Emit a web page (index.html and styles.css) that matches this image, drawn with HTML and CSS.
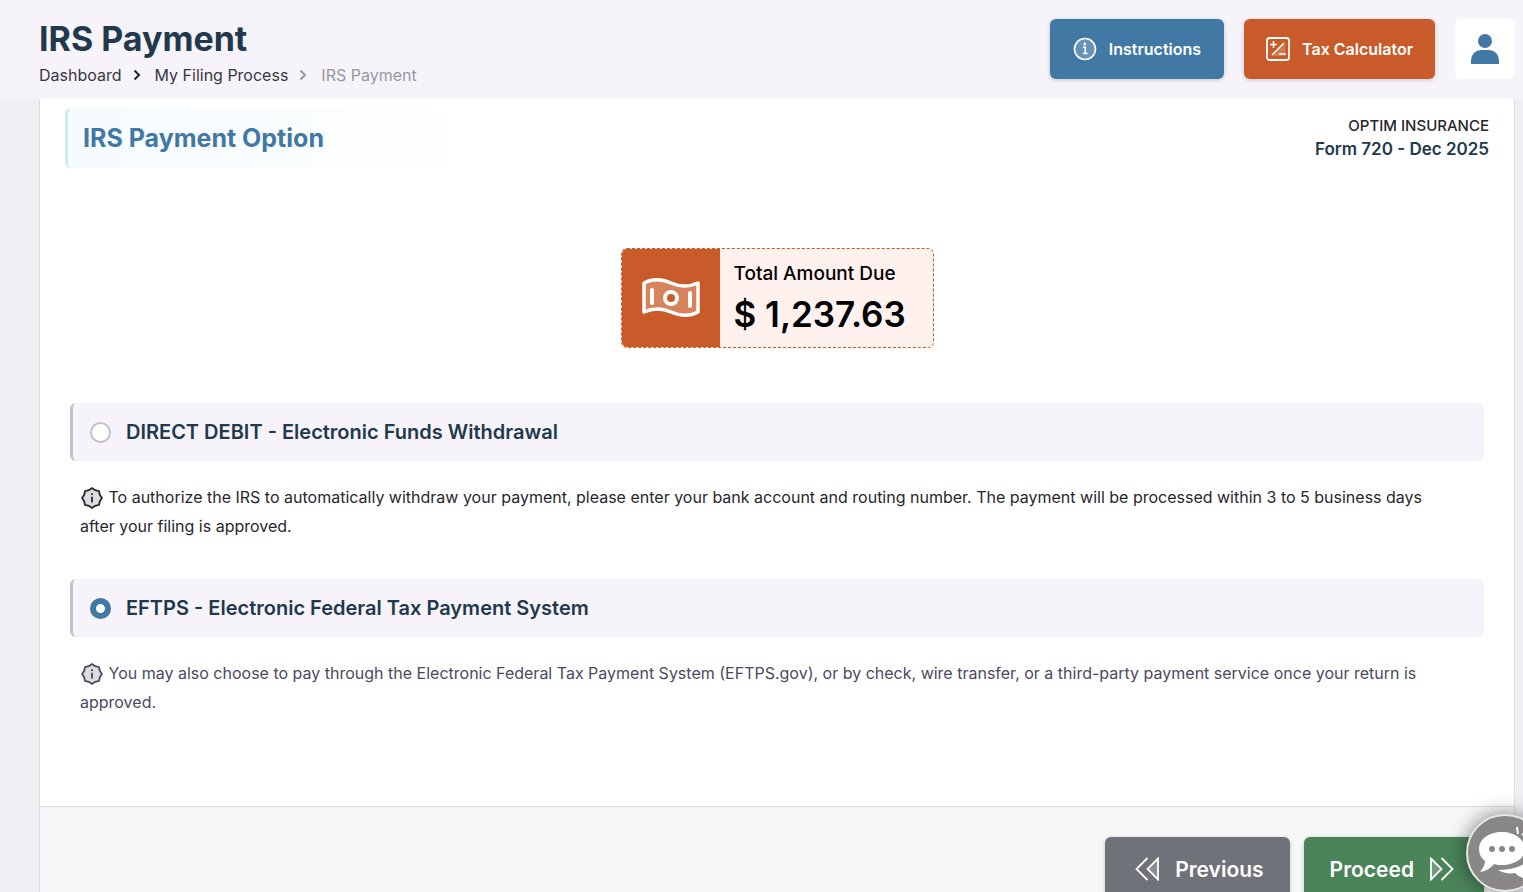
FILE: index.html
```html
<!DOCTYPE html>
<html lang="en">
<head>
  <meta charset="UTF-8">
  <meta name="viewport" content="width=device-width, initial-scale=1.0">
  <title>IRS Payment</title>
  <link rel="stylesheet" href="styles.css">
</head>
<body>
  <header class="page-header">
    <div class="page-heading">
      <h1>IRS Payment</h1>
      <nav class="breadcrumb" aria-label="Breadcrumb">
        <a href="#">Dashboard</a>
        <svg class="chevron" viewBox="0 0 8 12"><path d="M1.5 1.5 6 6l-4.5 4.5"/></svg>
        <a href="#">My Filing Process</a>
        <svg class="chevron muted" viewBox="0 0 8 12"><path d="M1.5 1.5 6 6l-4.5 4.5"/></svg>
        <span class="muted">IRS Payment</span>
      </nav>
    </div>
    <div class="header-actions">
      <button type="button" class="btn btn-blue">
        <svg class="btn-icon" viewBox="0 0 24 24">
          <circle cx="12" cy="12" r="10.5" fill="#fff" fill-opacity="0.2" stroke="#fff" stroke-width="1.6"/>
          <path d="M10 10.3h2.3v6.2M10 16.5h4.6" fill="none" stroke="#fff" stroke-width="1.6"/>
          <circle cx="11.8" cy="7" r="1.4" fill="#fff"/>
        </svg>
        Instructions
      </button>
      <button type="button" class="btn btn-orange">
        <svg class="btn-icon" viewBox="0 0 24 24">
          <rect x="1" y="1" width="22" height="22" rx="2.5" fill="none" stroke="#fff" stroke-width="1.8"/>
          <path d="M19 6v13H6z" fill="#fff" fill-opacity="0.2"/>
          <path d="M4 7.500h7M7.500 4v7M18 6 6 18M13 17h7" fill="none" stroke="#fff" stroke-width="1.5"/>
        </svg>
        Tax Calculator
      </button>
      <button type="button" class="profile-btn" aria-label="Profile">
        <svg viewBox="0 0 28 30"><circle cx="14" cy="7" r="7"/><path d="M0 30v-4a10 10 0 0 1 10-10h8a10 10 0 0 1 10 10v4z"/></svg>
      </button>
    </div>
  </header>

  <main class="card">
    <div class="card-body">
      <div class="card-top">
        <h2>IRS Payment Option</h2>
        <div class="filing-info">
          <p class="business">OPTIM INSURANCE</p>
          <p class="form-name">Form 720 - Dec 2025</p>
        </div>
      </div>

      <div class="amount-box">
        <div class="amount-icon">
          <svg viewBox="0 0 58 40">
            <path d="M2 5C11 0 20 1 29 5s18 4 27 0v29c-9 5-18 4-27 0s-18-4-27 0z" fill="#fff" fill-opacity="0.25" stroke="#fff" stroke-width="3.5" stroke-linejoin="round"/>
            <circle cx="29" cy="20" r="6" fill="#c85b29" stroke="#fff" stroke-width="4"/>
            <path d="M10 12v13M48 15v13" stroke="#fff" stroke-width="4" stroke-linecap="round"/>
          </svg>
        </div>
        <div class="amount-text">
          <p class="amount-label">Total Amount Due</p>
          <p class="amount-value">$ 1,237.63</p>
        </div>
      </div>

      <form class="options">
        <div class="option">
          <label class="option-head">
            <input type="radio" name="payment" value="debit">
            DIRECT DEBIT - Electronic Funds Withdrawal
          </label>
          <p class="option-note">
            <svg class="note-icon" viewBox="0 0 24 24"><path d="m12 1.2 3.5 2.3 4.1.9.9 4.1 2.3 3.5-2.3 3.5-.9 4.1-4.1.9-3.5 2.3-3.5-2.3-4.1-.9-.9-4.1L1.2 12l2.3-3.5.9-4.1 4.1-.9z"/><path d="M12 10.5V17M12 6.8v1.8"/></svg>
            To authorize the IRS to automatically withdraw your payment, please enter your bank account and routing number. The payment will be processed within 3 to 5 business days after your filing is approved.
          </p>
        </div>
        <div class="option">
          <label class="option-head">
            <input type="radio" name="payment" value="eftps" checked>
            EFTPS - Electronic Federal Tax Payment System
          </label>
          <p class="option-note note-soft">
            <svg class="note-icon" viewBox="0 0 24 24"><path d="m12 1.2 3.5 2.3 4.1.9.9 4.1 2.3 3.5-2.3 3.5-.9 4.1-4.1.9-3.5 2.3-3.5-2.3-4.1-.9-.9-4.1L1.2 12l2.3-3.5.9-4.1 4.1-.9z"/><path d="M12 10.5V17M12 6.8v1.8"/></svg>
            You may also choose to pay through the Electronic Federal Tax Payment System (EFTPS.gov), or by check, wire transfer, or a third-party payment service once your return is approved.
          </p>
        </div>
      </form>
    </div>

    <div class="card-footer">
      <button type="button" class="btn btn-lg btn-gray">
        <svg class="btn-icon" viewBox="0 0 24 24"><path d="M23 1.5v21L12.5 12z" fill="#fff" fill-opacity="0.2"/><path d="M23 1.5v21L12.5 12zM12.5 1l-11 11 11 11" fill="none" stroke="#fff" stroke-width="1.8"/></svg>
        Previous
      </button>
      <button type="button" class="btn btn-lg btn-green">
        Proceed
        <svg class="btn-icon" viewBox="0 0 24 24"><path d="M1 1.5v21L11.5 12z" fill="#fff" fill-opacity="0.2"/><path d="M1 1.5v21L11.5 12zM11.5 1l11 11-11 11" fill="none" stroke="#fff" stroke-width="1.8"/></svg>
      </button>
    </div>
  </main>

  <button type="button" class="chat-btn" aria-label="Open chat">
    <svg viewBox="0 0 74 74">
      <path d="M30 54c5 3 11 4 17 3 4 4 9 6 15 6-3-3-4-6-4-9 6-4 8-9 7-15-5 9-18 15-35 15z" fill="#fff"/>
      <path d="M34 16c-13 0-23 7-23 17 0 5 2 9 6 12 0 4-2 7-5 11 6-1 11-4 14-8 3 1 5 1 8 1 13 0 23-7 23-16s-10-17-23-17z" fill="#fff"/>
      <g fill="#8a8887"><circle cx="24" cy="33" r="3"/><circle cx="34" cy="33" r="3"/><circle cx="44" cy="33" r="3"/></g>
      <path d="m50 18-1-7M54 19l6-5M56 23l7-1" stroke="#fff" stroke-width="2"/>
    </svg>
  </button>
</body>
</html>
```
FILE: styles.css
```css
* {
  margin: 0;
  padding: 0;
  box-sizing: border-box;
}

body {
  height: 100vh;
  overflow: hidden;
  font-family: Inter, 'Liberation Sans', sans-serif;
  font-size: 16px;
  color: #27272d;
  background: #f0f0f4;
}

button {
  font-family: inherit;
  border: none;
  cursor: pointer;
}

/* Header */
.page-header {
  display: flex;
  justify-content: space-between;
  align-items: flex-start;
  min-height: 99px;
  padding: 19px 8px 0 39px;
  background: #f6f4fa;
}

.page-heading h1 {
  color: #22394d;
  font-size: 34px;
  font-weight: 700;
  line-height: 40px;
  margin-bottom: 4px;
}

.breadcrumb {
  display: flex;
  align-items: center;
  line-height: 24px;
}

.breadcrumb a {
  color: #37373f;
  text-decoration: none;
}

.breadcrumb .muted {
  color: #97979f;
}

.chevron {
  width: 8px;
  height: 12px;
  margin: 0 14px 0 11px;
  fill: none;
  stroke: currentColor;
  stroke-width: 2;
}

.header-actions {
  display: flex;
  align-items: center;
  gap: 20px;
}

.btn {
  display: flex;
  align-items: center;
  justify-content: center;
  gap: 12px;
  height: 60px;
  padding: 0 22px;
  border-radius: 6px;
  color: #fff;
  font-size: 16px;
  font-weight: 600;
  white-space: nowrap;
  box-shadow: 0 1px 4px rgba(0, 0, 0, 0.2);
}

.btn-icon {
  width: 24px;
  height: 24px;
}

.btn-blue {
  padding: 0 23px;
  background: #4178a4;
}

.btn-orange {
  background: #c85b29;
}

.profile-btn {
  display: flex;
  align-items: center;
  justify-content: center;
  width: 60px;
  height: 60px;
  border-radius: 6px;
  background: #fff;
}

.profile-btn svg {
  width: 28px;
  height: 30px;
  fill: #4178a4;
}

/* Card */
.card {
  margin: 0 8px 0 39px;
  border: 1px solid #dcdce0;
  border-top: none;
  background: #fff;
}

.card-body {
  padding: 9px 25px 89px;
}

.card-top {
  display: flex;
  justify-content: space-between;
  align-items: flex-start;
  margin-bottom: 80px;
}

.card-top h2 {
  width: 430px;
  padding: 0 15px;
  border-left: 3px solid #cdebe9;
  border-radius: 6px;
  background: linear-gradient(90deg, #f5fbfe, #fff);
  color: #4178a4;
  font-size: 25px;
  font-weight: 700;
  line-height: 60px;
}

.filing-info {
  padding-top: 6px;
  text-align: right;
  line-height: 24px;
}

.business {
  font-size: 15px;
  font-weight: 500;
}

.form-name {
  color: #22394d;
  font-size: 17px;
  font-weight: 600;
  line-height: 22px;
}

.amount-box {
  display: flex;
  width: 313px;
  height: 100px;
  margin: 0 auto 55px;
  border: 1px dashed #c85b29;
  border-radius: 6px;
  overflow: hidden;
  background: #fef1ee;
  color: #000;
}

.amount-icon {
  display: flex;
  align-items: center;
  justify-content: center;
  width: 98px;
  background: #c85b29;
}

.amount-icon svg {
  width: 58px;
  height: 40px;
}

.amount-text {
  padding: 9px 14px;
}

.amount-label {
  font-size: 19px;
  font-weight: 500;
  line-height: 32px;
}

.amount-value {
  font-size: 35px;
  font-weight: 600;
  line-height: 48px;
}

.options {
  display: flex;
  flex-direction: column;
  gap: 38px;
  padding: 0 5px;
}

.option-head {
  display: flex;
  align-items: center;
  gap: 15px;
  height: 58px;
  padding: 0 17px;
  border-left: 3px solid #c2c2c8;
  border-radius: 6px;
  background: #f6f4fa;
  color: #22394d;
  font-size: 20px;
  font-weight: 600;
}

.option-head input {
  appearance: none;
  width: 21px;
  height: 21px;
  border: 2px solid #c2c2c8;
  border-radius: 50%;
  background: #fff;
}

.option-head input:checked {
  border: 6px solid #4178a4;
}

.option-note {
  padding: 22px 30px 0 10px;
  line-height: 29px;
}

.note-soft {
  color: #4a4a60;
}

.note-icon {
  width: 22px;
  height: 22px;
  margin: 0 1px;
  vertical-align: -6px;
  fill: #dddcdf;
  stroke: currentColor;
  stroke-width: 2;
  stroke-linejoin: round;
}

.card-footer {
  display: flex;
  justify-content: flex-end;
  gap: 14px;
  padding: 30px;
  border-top: 1px solid #dcdce0;
  background: #f8f7f8;
}

.btn-lg {
  gap: 16px;
  height: 64px;
  font-size: 21px;
}

.btn-gray {
  padding: 0 26px 0 30px;
  background: #6f7278;
}

.btn-green {
  padding: 0 30px 0 26px;
  background: #4a8459;
}

/* Chat widget, partly off the right edge */
.chat-btn {
  position: fixed;
  right: -21px;
  bottom: 0;
  width: 78px;
  height: 78px;
  border: 2px solid #e6e6e6;
  border-radius: 50%;
  background: #8a8887;
  box-shadow: 0 0 20px rgba(0, 0, 0, 0.5);
}

.chat-btn svg {
  display: block;
  width: 74px;
  height: 74px;
}
```
